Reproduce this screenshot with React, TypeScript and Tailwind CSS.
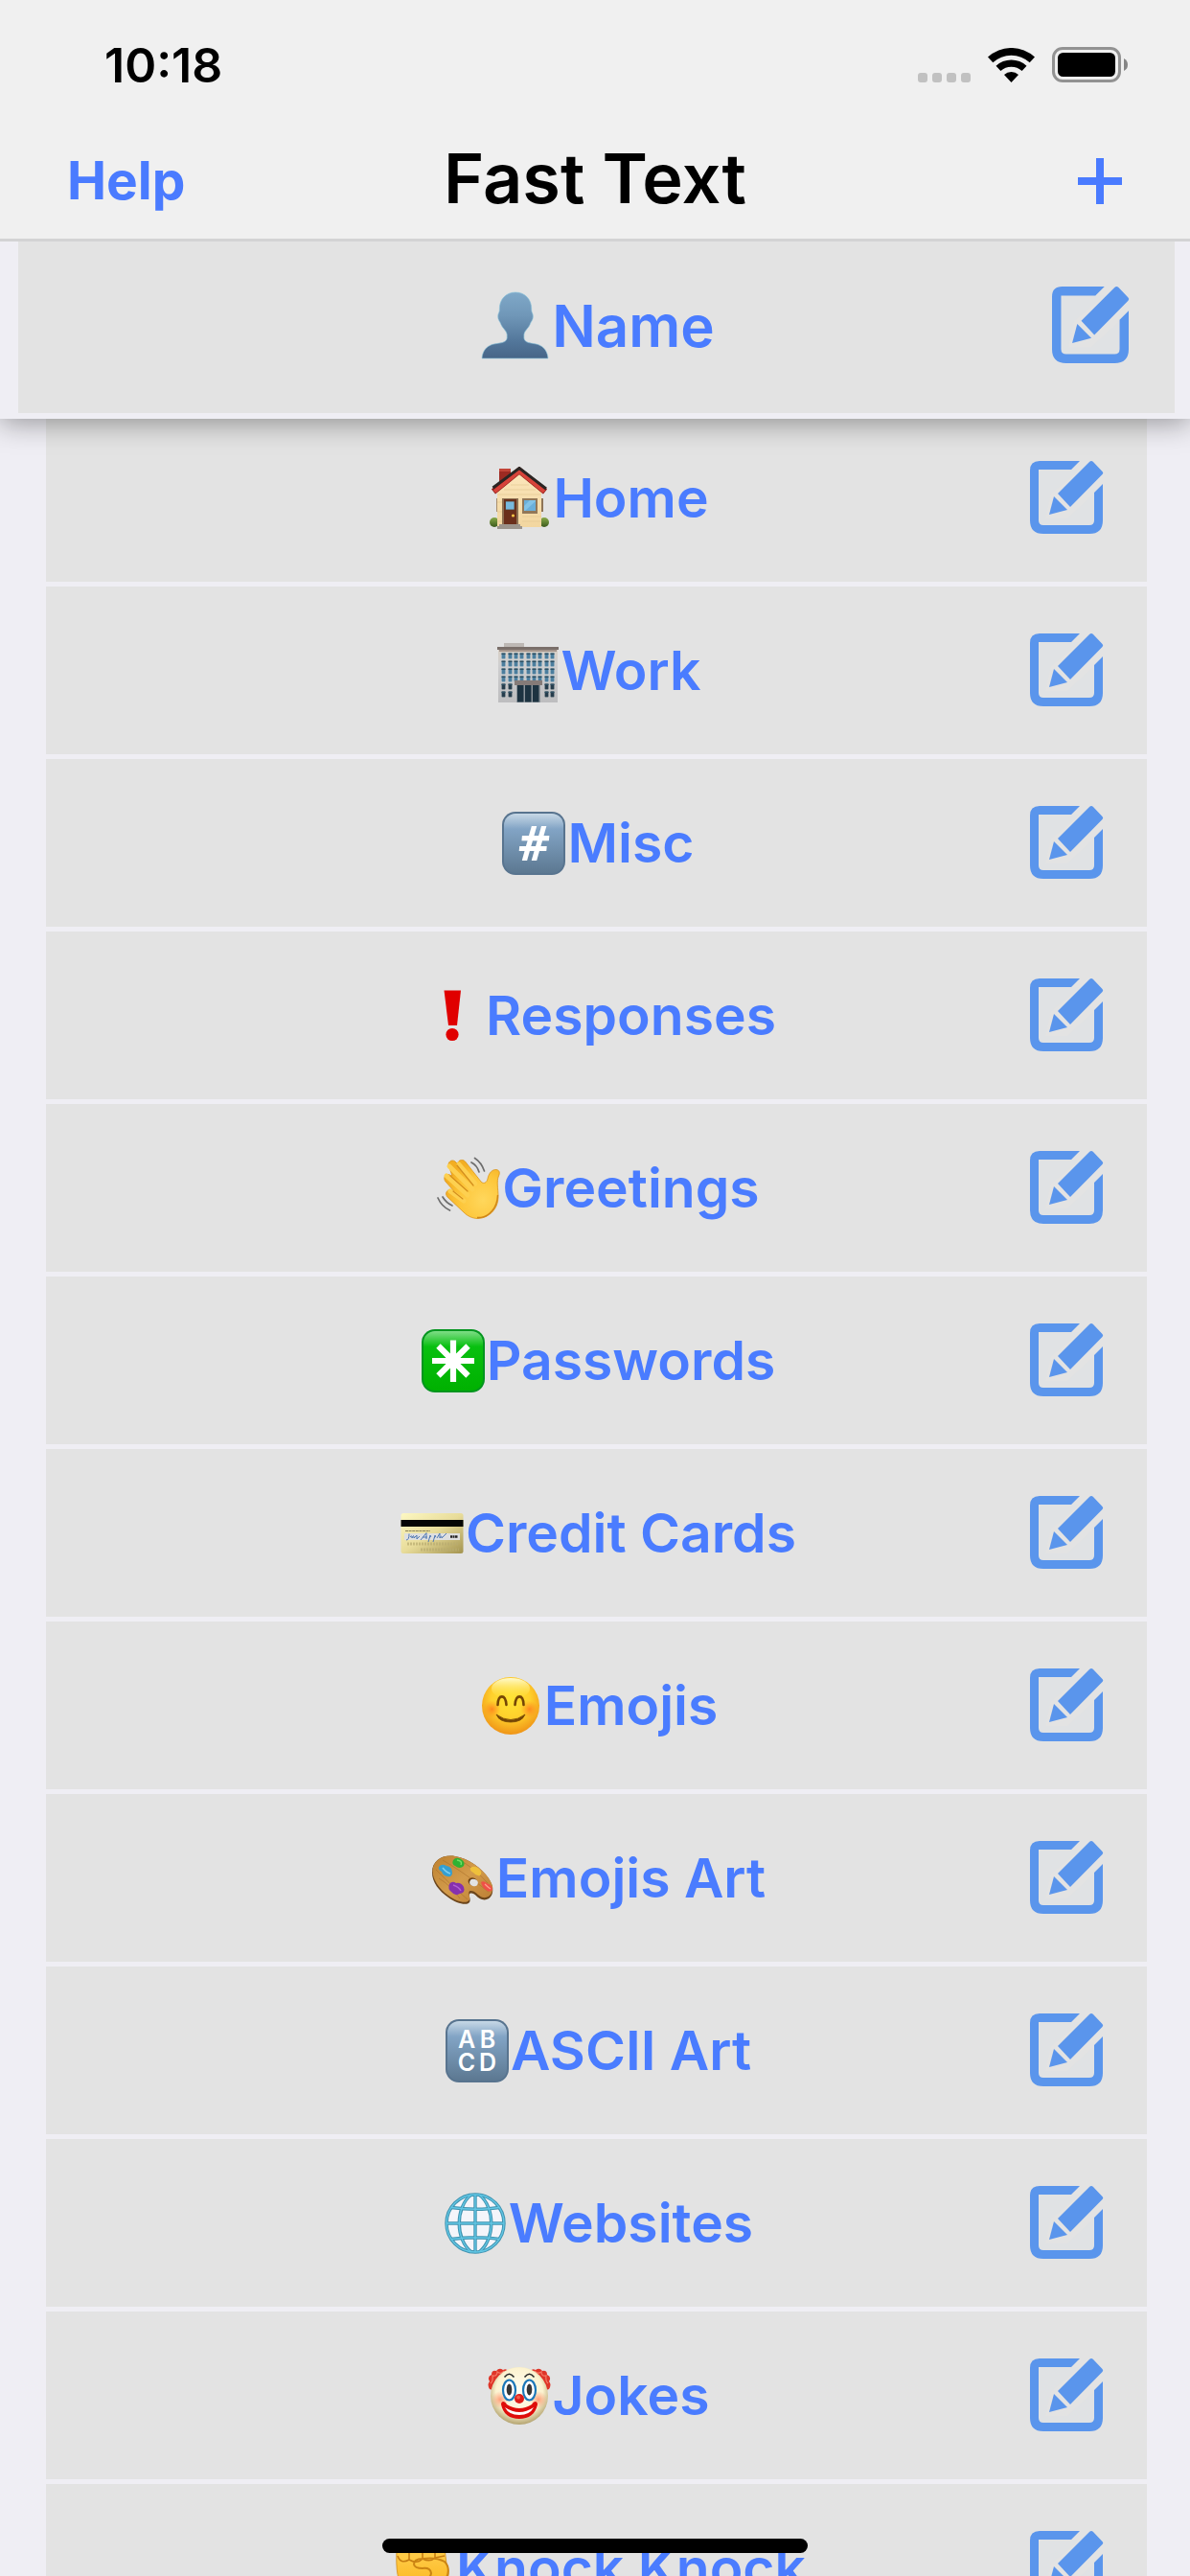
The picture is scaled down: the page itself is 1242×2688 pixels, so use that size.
import type { ReactNode } from "react";

type Category = { label: string; art: ReactNode };

function KeycapBase({ id, light, mid, dark, rim }: { id: string; light: string; mid: string; dark: string; rim: string }) {
  return (
    <>
      <defs>
        <linearGradient id={id} x1="0" y1="0" x2="0" y2="1">
          <stop offset="0" stopColor={light} />
          <stop offset="0.26" stopColor={mid} />
          <stop offset="1" stopColor={dark} />
        </linearGradient>
      </defs>
      <rect width="66" height="66" rx="14" fill={rim} />
      <rect x="2" y="2" width="62" height="62" rx="12" fill={`url(#${id})`} />
    </>
  );
}

const personArt = (
  <>
    <defs>
      <linearGradient id="person" x1="0" y1="0" x2="0" y2="1">
        <stop offset="0" stopColor="#7fa8c8" />
        <stop offset="0.35" stopColor="#7097b8" />
        <stop offset="0.75" stopColor="#52769a" />
        <stop offset="1" stopColor="#466587" />
      </linearGradient>
    </defs>
    <path
      d="M33.5 0 C43 0 50 7 49.5 18 C49.500 20 51 21 51 24 C51 28 49 29 48 32 C46.500 36 42.500 38 42 42 L42 46 C43 52 52 50 58 53 C63 55.500 65.500 60 66 66 H0 C0.5 60 3 55.500 8 53 C14 50 24 52 25 46 L25 42 C24.500 38 20.500 36 19 32 C18 29 16 28 16 24 C16 21 17.500 20 17.500 18 C17 7 24 0 33.500 0Z"
      fill="url(#person)"
      stroke="#8fc6dc"
      strokeWidth="0.6"
    />
  </>
);

const homeArt = (
  <>
    <defs>
      <linearGradient id="wall" x1="0" y1="0" x2="0" y2="1">
        <stop offset="0" stopColor="#fbe6bb" />
        <stop offset="1" stopColor="#f2d6a0" />
      </linearGradient>
      <linearGradient id="bush" x1="0" y1="0" x2="0" y2="1">
        <stop offset="0" stopColor="#88aa48" />
        <stop offset="1" stopColor="#3c5a1d" />
      </linearGradient>
    </defs>
    <rect x="12" y="3" width="12" height="18" fill="#9d2a22" />
    <rect x="12" y="2" width="12" height="3" fill="#c24438" />
    <rect x="9" y="33" width="3" height="14" fill="#a98e6c" />
    <rect x="55" y="33" width="3" height="14" fill="#8d7457" />
    <circle cx="7" cy="58" r="5" fill="url(#bush)" />
    <circle cx="59" cy="58" r="5" fill="url(#bush)" />
    <path d="M10 25 L33 6 L56 25 V63 H10Z" fill="url(#wall)" />
    <path d="M24 19 H43 M17 24 H50 M10 29 H56 M36 52 H56 M36 57 H56 M10 37 H15 M10 47 H15 M10 57 H15" stroke="#e4c894" strokeWidth="0.7" />
    <path d="M6 26 L33 4 L60 26" fill="none" stroke="#8f1d18" strokeWidth="6.500" />
    <path d="M7 26 L33 5 L59 26" fill="none" stroke="#d7433a" strokeWidth="4" />
    <path d="M5.500 22 L33 1.500 L61 23" fill="none" stroke="#2b2523" strokeWidth="3" />
    <rect x="15" y="33" width="17" height="28" fill="#8c7052" />
    <rect x="17" y="34" width="13" height="26" fill="#6a2f1b" />
    <rect x="18.500" y="36" width="9.500" height="9" fill="#77b9de" stroke="#5e3a26" strokeWidth="0.8" />
    <circle cx="26.500" cy="51" r="1.600" fill="#f6c445" />
    <rect x="36" y="33" width="16" height="16" fill="#927758" />
    <rect x="38" y="35" width="12" height="11" fill="#6aafda" />
    <path d="M38 41 L44 35 H50 V36 L39 46 H38Z" fill="#83c3e6" />
    <path d="M12 60 H34 V62 H36 V65 H10 V62 H12Z" fill="#9b948c" />
  </>
);

const workArt = (
  <>
    <defs>
      <linearGradient id="office" x1="0" y1="0" x2="0" y2="1">
        <stop offset="0" stopColor="#d9cfc4" />
        <stop offset="0.3" stopColor="#cfcfd0" />
        <stop offset="1" stopColor="#bdbdbf" />
      </linearGradient>
    </defs>
    <rect x="8" y="4" width="21" height="5" fill="#bdb8b4" />
    <rect x="2" y="10" width="62" height="56" fill="url(#office)" />
    <rect x="1" y="8" width="64" height="3" fill="#7a6f6a" />
    <rect x="3" y="11" width="60" height="2" fill="#a3958c" />
    {[14, 22, 30, 38, 46, 54].map((y, row) =>
      [5, 12, 18, 24, 31, 37, 43, 50, 56].map((x, col) =>
        row > 3 && col > 1 && col < 7 ? null : (
          <g key={`${x}-${y}`}>
            <rect x={x} y={y} width="5" height="7" fill="#e3e0dd" />
            <rect x={x + 0.5} y={y + 0.5} width="4" height="6" fill={row > 3 ? "#263d4c" : "#4b7e9e"} />
            <rect x={x + 0.5} y={y + 0.5} width="4" height="1.500" fill="#2f5063" />
          </g>
        ),
      ),
    )}
    <rect x="19" y="43" width="29" height="5" fill="#857b78" />
    <rect x="21" y="48" width="25" height="18" fill="#8d959b" />
    <rect x="22" y="48" width="6.500" height="17.500" fill="#1d3341" />
    <rect x="30" y="48" width="6.500" height="17.500" fill="#1d3341" />
    <rect x="38" y="48" width="6.500" height="17.500" fill="#1d3341" />
  </>
);

const miscArt = (
  <>
    <KeycapBase id="hashcap" light="#c7d8e6" mid="#82a4c5" dark="#5c7891" rim="#58748f" />
    <text x="33" y="51" textAnchor="middle" fill="#fff" fontSize="50" className="font-['Open_Sans',sans-serif] font-bold italic">
      #
    </text>
  </>
);

const responsesArt = (
  <g fill="#e00000">
    <path d="M24.500 6.500 H42 L38 43 H29Z" />
    <circle cx="33" cy="52.500" r="6.600" />
  </g>
);

const greetingsArt = (
  <>
    <defs>
      <radialGradient id="hand" cx="0.7" cy="0.68" r="0.7">
        <stop offset="0" stopColor="#ffd75c" />
        <stop offset="0.6" stopColor="#fdc63a" />
        <stop offset="1" stopColor="#f3ae22" />
      </radialGradient>
    </defs>
    <path
      d="M12.500 10 C10.500 6 15.500 2 19 5 L22 8 C21 4.500 26 1.500 29.500 5 L46 26 C49 29 52 27 53 23 C54 17 58 13 62 13.500 C65.500 14 66 17 64.500 20 C62 26 64 33 64 42 C64 55 54 64 43 64.500 C37 64.500 32 62 28 58 L11 42 C7.500 38 11 33 16 35 L18 36 L9 26 C6 22 9 17 13.500 19 L16 20 Z"
      fill="url(#hand)"
      stroke="#db941b"
      strokeWidth="0.8"
    />
    <path d="M13 10 L37 34 M23 8 L40 28 M10 20 L32 40 M14 36 L28 46" stroke="#fdd050" strokeWidth="5" strokeLinecap="round" />
    <path d="M21 9 L38 30 M14 20 L32 36 M17 36 L27 44" fill="none" stroke="#d48e1d" strokeWidth="1.200" strokeLinecap="round" />
    <path d="M42 63.500 C55 64 63 53 63.500 40" fill="none" stroke="#cf8516" strokeWidth="1.400" />
    <g fill="none" stroke="#6d6d6d" strokeWidth="1.700" strokeLinecap="round">
      <path d="M36 6 Q42 9 44 16" />
      <path d="M39.500 1.500 Q46.500 6 49.500 15" />
      <path d="M1 43 Q5 52 13.500 56" />
      <path d="M6 42 Q9.500 48 16 51" />
    </g>
  </>
);

const passwordsArt = (
  <>
    <KeycapBase id="starcap" light="#7fdd87" mid="#08c010" dark="#00b100" rim="#04951f" />
    <path d="M33 11.500 V55 M11 33 H55 M17.500 17.500 L48.500 48.500 M48.500 17.500 L17.500 48.500" stroke="#fff" strokeWidth="6.200" />
    <circle cx="33" cy="33" r="8" fill="#fff" />
  </>
);

const cardsArt = (
  <>
    <defs>
      <linearGradient id="card" x1="0" y1="0" x2="1" y2="1">
        <stop offset="0" stopColor="#fdf8c3" />
        <stop offset="0.5" stopColor="#e8dc9a" />
        <stop offset="1" stopColor="#a3934f" />
      </linearGradient>
    </defs>
    <rect x="0.500" y="12" width="65" height="42" rx="2.500" fill="url(#card)" />
    <rect x="0.500" y="19" width="65" height="7" fill="#050505" />
    <path d="M5 30.500 H31" stroke="#8b8256" strokeWidth="1.200" strokeDasharray="3 0.6" />
    <rect x="4" y="33" width="58" height="7" fill="#dedfe0" />
    <path
      d="M6 40 Q9 40 9 33.500 M10 37 Q12 34 12 38 Q14 33 14 38 L17 35 V39 L20 36 M21 40 L27 32.500 L27 39 M23 37 H28 M29 42 L31 35 Q33 36 30 38 M34 42 L36 35 Q38 36 35 38 M38 38 L41 33 V38 Q43 34 43 38 L48 33"
      fill="none"
      stroke="#4f78b4"
      strokeWidth="1"
    />
    <path d="M52 36.500 H60" stroke="#222" strokeWidth="2.400" strokeDasharray="2 0.5" />
    <path d="M7 44 H61 M21 50 H61" stroke="#b9ac70" strokeWidth="3" strokeDasharray="2 1" opacity="0.7" />
  </>
);

const smileArt = (
  <>
    <defs>
      <radialGradient id="smile" cx="0.5" cy="0.38" r="0.62">
        <stop offset="0" stopColor="#ffe433" />
        <stop offset="0.55" stopColor="#ffd02c" />
        <stop offset="1" stopColor="#ef9417" />
      </radialGradient>
      <linearGradient id="shine" x1="0" y1="0" x2="0" y2="1">
        <stop offset="0" stopColor="#fffbd0" />
        <stop offset="1" stopColor="#ffe640" stopOpacity="0" />
      </linearGradient>
      <radialGradient id="blush">
        <stop offset="0" stopColor="#ff7a1c" stopOpacity="0.8" />
        <stop offset="1" stopColor="#ff8a1c" stopOpacity="0" />
      </radialGradient>
    </defs>
    <circle cx="33" cy="33" r="30" fill="url(#smile)" />
    <ellipse cx="33" cy="15" rx="20" ry="11" fill="url(#shine)" />
    <circle cx="13.500" cy="36.500" r="9" fill="url(#blush)" />
    <circle cx="52.500" cy="36.500" r="9" fill="url(#blush)" />
    <path d="M19.500 32 C20 20.500 27.500 20.500 28.500 32 M37.500 32 C38.500 20.500 46 20.500 46.500 32" fill="none" stroke="#754605" strokeWidth="2.600" strokeLinecap="round" />
    <path d="M18 42 Q33 53 48 42 Q45 50 33 50 Q21 50 18 42Z" fill="#754605" stroke="#754605" strokeWidth="0.800" strokeLinejoin="round" />
  </>
);

const paletteArt = (
  <>
    <defs>
      <linearGradient id="wood" x1="0" y1="0" x2="1" y2="1">
        <stop offset="0" stopColor="#bd8130" />
        <stop offset="0.5" stopColor="#d39b4b" />
        <stop offset="1" stopColor="#bb7d33" />
      </linearGradient>
    </defs>
    <path
      d="M1 27 C1 14 12 8 25 10 C43 13 60 28 64 42 C65.500 51 60 57 53 55 C47 53 46 48 41 48.500 C38 50 42 55 40 58 C37 62 26 59 18 53 C8 46 1 37 1 27Z"
      fill="#6b451b"
    />
    <path
      d="M1.500 25 C2 14 13 8 25 10 C43 13 60 28 64 41 C65 49 60 54 54 53 C48 51 47 46 41 46 C37 47 42 53 39.500 56 C36 60 26 57 18 51 C8 44 1.500 34 1.500 25Z"
      fill="url(#wood)"
    />
    <path d="M5 24 Q25 44 38 55 M12 14 Q30 24 60 47 M8 33 Q20 40 30 54 M28 13 Q45 22 59 38" fill="none" stroke="#a9712b" strokeWidth="0.6" />
    <ellipse cx="44" cy="28" rx="5" ry="4" fill="#694015" opacity="0" />
    <ellipse cx="43.500" cy="36.500" rx="5" ry="4" fill="#694015" transform="rotate(20 43.5 36.5)" />
    <ellipse cx="44.500" cy="37.500" rx="4.400" ry="3.600" fill="#e3e3e3" transform="rotate(20 44.5 37.5)" />
    <path d="M8 21 Q11 17 16 20 Q22 21 22 27 Q22 32 17 31 Q12 30 11 26 Q7 24 8 21Z" fill="#359fd2" />
    <path d="M12 22 Q16 27 20 28" fill="none" stroke="#80d0f0" strokeWidth="1.500" />
    <path d="M23 14 Q26 10 31 13 Q36 16 34 20 Q30 24 25 20 Q21 18 23 14Z" fill="#30b233" />
    <path d="M27 14 Q33 15 31 19" fill="none" stroke="#75df64" strokeWidth="1.500" />
    <path d="M41 22 Q45 19 50 23 Q54 27 51 30 Q47 31 44 27 Q40 25 41 22Z" fill="#efc03b" />
    <path d="M52 37 Q55 35 58 38 Q64 40 64 45 Q61 48 57 45 Q53 42 52 37Z" fill="#ef5147" />
    <path d="M56 39 Q60 43 62 44" stroke="#ff9c8a" strokeWidth="1.200" fill="none" />
    <path d="M19 39 Q22 35 26 38 Q31 37 34 42 Q36 48 30 49 Q25 52 21 47 Q17 44 19 39Z" fill="#8631ae" />
    <path d="M23 40 Q29 42 31 46" stroke="#b25ed6" strokeWidth="1.400" fill="none" />
  </>
);

const asciiArt = (
  <>
    <KeycapBase id="abcdcap" light="#c7d8e6" mid="#82a4c5" dark="#5c7891" rim="#58748f" />
    <g fill="#fff" fontSize="25" textAnchor="middle" className="font-[Inter,sans-serif] font-semibold">
      <text x="22" y="30">A</text>
      <text x="44" y="30">B</text>
      <text x="22" y="54">C</text>
      <text x="44" y="54">D</text>
    </g>
  </>
);

const globeArt = (
  <>
    <circle cx="33" cy="33" r="30.500" fill="#f4f5fa" />
    <g fill="none" stroke="#3f93b0" strokeWidth="3.400">
      <circle cx="33" cy="33" r="30" />
      <path d="M33 3 V63 M3 33 H63 M8 16.500 Q33 20 58 16.500 M8 49.500 Q33 46 58 49.500" />
      <path d="M29 3 C12 16 12 50 29 63 M37 3 C54 16 54 50 37 63" />
    </g>
    <g fill="none" stroke="#62c6e4" strokeWidth="1.400">
      <circle cx="33" cy="33" r="30" />
      <path d="M33 3 V63 M3 33 H63 M8 16.500 Q33 20 58 16.500 M8 49.500 Q33 46 58 49.500" />
      <path d="M29 3 C12 16 12 50 29 63 M37 3 C54 16 54 50 37 63" />
    </g>
  </>
);

const clownArt = (
  <>
    <defs>
      <radialGradient id="clown" cx="0.5" cy="0.42" r="0.58">
        <stop offset="0" stopColor="#fffdf3" />
        <stop offset="0.7" stopColor="#fcf3d0" />
        <stop offset="1" stopColor="#b3a36f" />
      </radialGradient>
      <radialGradient id="rouge">
        <stop offset="0" stopColor="#ff7b54" stopOpacity="0.7" />
        <stop offset="1" stopColor="#ff8a64" stopOpacity="0" />
      </radialGradient>
    </defs>
    <path d="M2 26 Q-1 21 2 18 Q-1 13 4 11 Q4 6 9 7 Q12 3 16 6 Q20 4 22 8 L5 27Z M64 26 Q67 21 64 18 Q67 13 62 11 Q62 6 57 7 Q54 3 50 6 Q46 4 44 8 L61 27Z" fill="#df3528" />
    <path d="M3 20 Q6 17 5 12 Q10 13 10 8 Q14 11 17 7 M63 20 Q60 17 61 12 Q56 13 56 8 Q52 11 49 7" fill="none" stroke="#f47662" strokeWidth="1.300" />
    <circle cx="33" cy="33" r="30" fill="url(#clown)" />
    <circle cx="13" cy="37" r="9" fill="url(#rouge)" />
    <circle cx="53" cy="37" r="9" fill="url(#rouge)" />
    <g fill="#fff" stroke="#1b77b8" strokeWidth="2.200">
      <ellipse cx="22.500" cy="27" rx="6.500" ry="10.500" />
      <ellipse cx="43.500" cy="27" rx="6.500" ry="10.500" />
    </g>
    <ellipse cx="22.500" cy="26.500" rx="2.800" ry="6" fill="#353535" />
    <ellipse cx="43.500" cy="26.500" rx="2.800" ry="6" fill="#353535" />
    <path d="M17.500 13.500 Q22.500 7 27.500 13.500 M38.500 13.500 Q43.500 7 48.500 13.500" fill="none" stroke="#282828" strokeWidth="1.500" />
    <path d="M14 42 C14 38 18 38 20 42 Q33 50 46 42 C48 38 52 38 52 42 C50 52 43 57 33 57 C23 57 16 52 14 42Z" fill="#df0d0a" />
    <path d="M18 45 Q33 55 48 45 Q44 53 33 53 Q22 53 18 45Z" fill="#fff" />
    <circle cx="33" cy="36" r="5" fill="#dd1c17" />
    <circle cx="32" cy="34.500" r="2" fill="#f35b49" />
  </>
);

const fistArt = (
  <>
    <defs>
      <linearGradient id="fist" x1="0" y1="0" x2="0" y2="1">
        <stop offset="0" stopColor="#ffd35a" />
        <stop offset="0.6" stopColor="#fdbf2e" />
        <stop offset="1" stopColor="#e59c18" />
      </linearGradient>
    </defs>
    <path d="M6 14 Q6 3 14 4 Q20 1 26 4 Q33 1 40 4 Q52 2 56 12 L58 28 C62 36 61 46 52 56 V66 H14 V56 C7 48 5 34 6 14Z" fill="url(#fist)" stroke="#d18b18" strokeWidth="0.8" />
    <path d="M7 20 Q10 29 19 24 Q27 29 33 23 Q41 27 46 22 L56 20 M19 8 V24 M33 8 V23 M46 8 V22" fill="none" stroke="#c67d12" strokeWidth="1.600" />
    <path d="M24 29 Q24 23 33 23 Q47 21 56 26 C62 32 60 41 56 45 M24 29 Q25 33 33 33 Q41 32 42 38 Q41 45 32 46" fill="none" stroke="#cb8413" strokeWidth="2" strokeLinecap="round" />
  </>
);

const pinned: Category = { label: "Name", art: personArt };

const categories: Category[] = [
  { label: "Home", art: homeArt },
  { label: "Work", art: workArt },
  { label: "Misc", art: miscArt },
  { label: "Responses", art: responsesArt },
  { label: "Greetings", art: greetingsArt },
  { label: "Passwords", art: passwordsArt },
  { label: "Credit Cards", art: cardsArt },
  { label: "Emojis", art: smileArt },
  { label: "Emojis Art", art: paletteArt },
  { label: "ASCII Art", art: asciiArt },
  { label: "Websites", art: globeArt },
  { label: "Jokes", art: clownArt },
  { label: "Knock Knock", art: fistArt },
];

function EditIcon({ className }: { className: string }) {
  return (
    <svg viewBox="0 0 76 76" className={className} aria-hidden="true">
      <rect x="9" y="9" width="58" height="58" rx="5" fill="#e0e2e4" />
      <path d="M50 11 L58 3 L74 18 L65 36 L39 60 L16 60 L22 34Z" fill="#e3e3e3" />
      <g fill="#5a95ec">
        <path d="M52 0H10Q0 0 0 10V62Q0 76 14 76H62Q76 76 76 62V24L67 33V62Q67 67 62 67H14Q9 67 9 62V9H43Z" />
        <path d="M29 34 L62 1 Q64 -1 66 1 L75.500 11 Q77 12.500 75.500 14 L42 48Z" />
        <path d="M25 37 L39 51 L20 56Z" />
      </g>
    </svg>
  );
}

function StatusBar() {
  return (
    <div className="flex h-33 items-end justify-between pr-16 pb-[46px] pl-[109px]">
      <time className="-mb-3 text-[50px] leading-15 font-semibold">10:18</time>
      <div className="flex items-end gap-4.5">
        <div className="flex gap-[5px]">
          <span className="size-2.5 rounded-[3px] bg-[#c1c1c1]" />
          <span className="size-2.5 rounded-[3px] bg-[#c1c1c1]" />
          <span className="size-2.5 rounded-[3px] bg-[#c1c1c1]" />
          <span className="size-2.5 rounded-[3px] bg-[#c1c1c1]" />
        </div>
        <svg viewBox="0 0 49 36" className="h-9 w-[49px]" aria-label="Wi-Fi">
          <path d="M0 9.600 A36 36 0 0 1 49 9.600 L43.700 15.300 A28.300 28.300 0 0 0 5.300 15.300Z" />
          <path d="M8.500 18.700 A23.600 23.600 0 0 1 40.500 18.700 L35.600 24 A16.300 16.300 0 0 0 13.400 24Z" />
          <path d="M17 28 A11 11 0 0 1 32 28 L24.500 36Z" />
        </svg>
        <svg viewBox="0 0 80 37" className="h-[37px] w-20" aria-label="Battery full">
          <rect x="1.500" y="1.500" width="69" height="34" rx="9.500" fill="none" stroke="#929292" strokeWidth="3" />
          <rect x="6" y="6" width="60" height="25" rx="5.500" />
          <path d="M75 12 Q79 14 79 18.500 Q79 23 75 25Z" fill="#858585" />
        </svg>
      </div>
    </div>
  );
}

export default function App() {
  return (
    <div className="flex h-screen flex-col overflow-hidden bg-[#efeef4] font-[Inter,sans-serif] text-black">
      <header className="shrink-0 border-b-3 border-[#d3d3d4] bg-[#f0f0f0]">
        <StatusBar />
        <nav className="grid h-[117px] grid-cols-3 items-start">
          <button className="justify-self-start pt-5 pl-[70px] text-[55px] leading-18 font-bold text-[#4a7bff]">Help</button>
          <h1 className="justify-self-center pt-2 text-[72px] leading-23 font-semibold whitespace-nowrap">Fast Text</h1>
          <button aria-label="Add category" className="justify-self-end pt-[33px] pr-[70px] text-[#4a7bff]">
            <svg viewBox="0 0 48 48" className="size-12" aria-hidden="true">
              <path d="M24 0 V48 M1 24 H47" stroke="currentColor" strokeWidth="8" />
            </svg>
          </button>
        </nav>
      </header>

      <section className="relative z-10 shrink-0 bg-[#efeef4] pr-4 pb-1.5 pl-[19px] shadow-[0_4px_28px_rgba(0,0,0,0.38)] [clip-path:inset(0_0_-40px_0)]">
        <div className="relative flex h-[179px] items-center justify-center bg-[#e3e3e3] pb-1">
          <button className="flex items-center gap-1 pl-1 text-[60px] leading-none font-semibold text-[#4a7cff]">
            <svg viewBox="0 0 66 66" className="size-[69px] overflow-visible" aria-hidden="true">
              {pinned.art}
            </svg>
            {pinned.label}
          </button>
          <button aria-label={`Edit ${pinned.label}`} className="absolute top-[47px] right-12">
            <EditIcon className="size-20 overflow-visible" />
          </button>
        </div>
      </section>

      <main className="min-h-0 flex-1 overflow-hidden pr-[45px] pl-12">
        <ul className="-mt-[5px] flex flex-col gap-[5px]">
          {categories.map(({ label, art }) => (
            <li key={label} className="relative flex h-[175px] shrink-0 items-center justify-center bg-[#e3e3e3]">
              <button className="flex items-center gap-0.5 pl-1 text-[57px] leading-none font-semibold text-[#4a7cff]">
                <svg viewBox="0 0 66 66" className="size-[66px]" aria-hidden="true">
                  {art}
                </svg>
                {label}
              </button>
              <button aria-label={`Edit ${label}`} className="absolute top-[49px] right-[46px]">
                <EditIcon className="size-[76px] overflow-visible" />
              </button>
            </li>
          ))}
        </ul>
      </main>

      <div className="fixed bottom-6 left-1/2 z-20 h-[15px] w-[444px] -translate-x-1/2 rounded-full bg-black" />
    </div>
  );
}
